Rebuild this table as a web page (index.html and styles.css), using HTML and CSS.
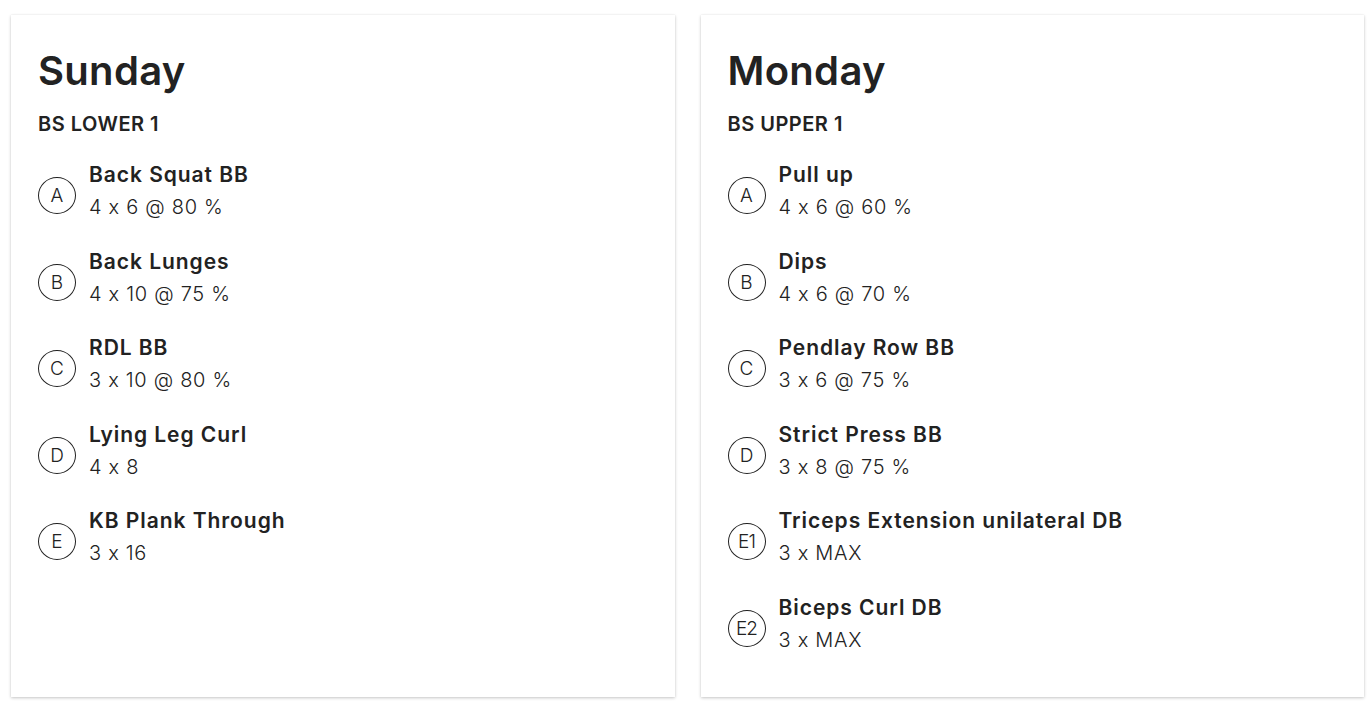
FILE: index.html
```html
<!DOCTYPE html>
<html>
<head>
<meta charset="utf-8">
<link rel="stylesheet" href="styles.css">
</head>
<body>
<div class="days">
  <section class="card">
    <h2 class="day">Sunday</h2>
    <h3 class="session">BS LOWER 1</h3>
    <ul class="list">
      <li class="ex"><span class="badge">A</span><div class="info"><div class="name">Back Squat BB</div><div class="detail">4 x 6 @ 80 %</div></div></li>
      <li class="ex"><span class="badge">B</span><div class="info"><div class="name">Back Lunges</div><div class="detail">4 x 10 @ 75 %</div></div></li>
      <li class="ex"><span class="badge">C</span><div class="info"><div class="name">RDL BB</div><div class="detail">3 x 10 @ 80 %</div></div></li>
      <li class="ex"><span class="badge">D</span><div class="info"><div class="name">Lying Leg Curl</div><div class="detail">4 x 8</div></div></li>
      <li class="ex"><span class="badge">E</span><div class="info"><div class="name">KB Plank Through</div><div class="detail">3 x 16</div></div></li>
    </ul>
  </section>
  <section class="card">
    <h2 class="day">Monday</h2>
    <h3 class="session">BS UPPER 1</h3>
    <ul class="list">
      <li class="ex"><span class="badge">A</span><div class="info"><div class="name">Pull up</div><div class="detail">4 x 6 @ 60 %</div></div></li>
      <li class="ex"><span class="badge">B</span><div class="info"><div class="name">Dips</div><div class="detail">4 x 6 @ 70 %</div></div></li>
      <li class="ex"><span class="badge">C</span><div class="info"><div class="name">Pendlay Row BB</div><div class="detail">3 x 6 @ 75 %</div></div></li>
      <li class="ex"><span class="badge">D</span><div class="info"><div class="name">Strict Press BB</div><div class="detail">3 x 8 @ 75 %</div></div></li>
      <li class="ex"><span class="badge small">E1</span><div class="info"><div class="name">Triceps Extension unilateral DB</div><div class="detail">3 x MAX</div></div></li>
      <li class="ex"><span class="badge small">E2</span><div class="info"><div class="name">Biceps Curl DB</div><div class="detail">3 x MAX</div></div></li>
    </ul>
  </section>
</div>
</body>
</html>
```

FILE: styles.css
```css
* { box-sizing: border-box; }
html, body { margin: 0; padding: 0; background: #fff; }
body {
  font-family: Inter, "Open Sans", sans-serif;
  font-feature-settings: "calt" 0;
  color: #222;
}
.days {
  display: flex;
  gap: 26px;
  padding: 15px 8px 11px 11px;
  height: 708px;
}
.card {
  flex: 1;
  background: #fff;
  box-shadow: 0 1px 3px rgba(0,0,0,0.22), 0 0 1px rgba(0,0,0,0.08);
  padding: 32px 27px 20px 27px;
}
.day {
  margin: 0;
  font-size: 40px;
  line-height: 48px;
  font-weight: 600;
  letter-spacing: 0.3px;
}
.session {
  margin: 15px 0 0 0;
  font-size: 20px;
  line-height: 28px;
  font-weight: 600;
  letter-spacing: 0.5px;
}
.list {
  list-style: none;
  margin: 22px 0 0 0;
  padding: 0;
}
.ex {
  display: flex;
  align-items: flex-start;
  gap: 13px;
  margin-bottom: 24.5px;
}
.badge {
  flex: none;
  width: 38px;
  height: 37px;
  margin-top: 17px;
  border: 1px solid #222;
  border-radius: 50%;
  display: flex;
  align-items: center;
  justify-content: center;
  font-size: 19px;
  font-weight: 300;
}
.badge.small { letter-spacing: -1px; }
.name {
  font-size: 21px;
  line-height: 30px;
  font-weight: 600;
  letter-spacing: 0.95px;
}
.detail {
  margin-top: 2px;
  font-size: 20px;
  line-height: 30px;
  font-weight: 300;
  letter-spacing: 0.7px;
}
```
